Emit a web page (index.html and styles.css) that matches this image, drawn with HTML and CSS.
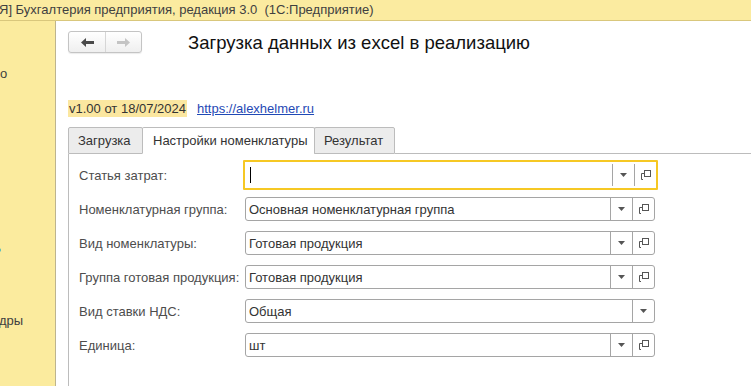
FILE: index.html
```html
<!DOCTYPE html>
<html lang="ru">
<head>
<meta charset="UTF-8" />
<title>Загрузка данных из excel в реализацию</title>
<link rel="stylesheet" href="styles.css">
</head>
<body>
<div class="titlebar">Я] Бухгалтерия предприятия, редакция 3.0  (1С:Предприятие)</div>

<div class="layout">
  <div class="sidebar">
    <span class="side-item first">о</span>
    <span class="side-dot"></span>
    <span class="side-item last">дры</span>
  </div>

  <div class="main">
    <div class="header">
      <div class="nav">
        <button class="nav-btn">
          <svg width="13" height="9" viewBox="0 0 13 9"><path d="M0 4.5 L5 0 V3 H13 V6 H5 V9 Z" fill="#4a4a4a"/></svg>
        </button>
        <button class="nav-btn">
          <svg width="13" height="9" viewBox="0 0 13 9"><path d="M13 4.5 L8 0 V3 H0 V6 H8 V9 Z" fill="#c4c4c4"/></svg>
        </button>
      </div>
      <h1 class="title">Загрузка данных из excel в реализацию</h1>
    </div>

    <div class="version">
      <span class="version-tag">v1.00 от 18/07/2024</span>
      <a class="site-link" href="#">https://alexhelmer.ru</a>
    </div>

    <div class="tabs">
      <div class="tab">Загрузка</div>
      <div class="tab active">Настройки номенклатуры</div>
      <div class="tab">Результат</div>
      <div class="tab-rest"></div>
    </div>

    <div class="panel">
      <div class="row">
        <label class="label">Статья затрат:</label>
        <div class="field focused">
          <span class="value"><span class="caret"></span></span>
          <span class="btn drop"><svg width="7" height="4" viewBox="0 0 7 4"><path d="M0 0 H7 L3.5 4 Z" fill="#555"/></svg></span>
          <span class="btn open"><svg width="11" height="10" viewBox="0 0 11 10"><rect x="4.5" y="0.5" width="6" height="6" fill="none" stroke="#555"/><path d="M4 3.5 H1.5 V9.5 M1.5 9.5 H3" fill="none" stroke="#555"/></svg></span>
        </div>
      </div>
      <div class="row">
        <label class="label">Номенклатурная группа:</label>
        <div class="field">
          <span class="value">Основная номенклатурная группа</span>
          <span class="btn drop"><svg width="7" height="4" viewBox="0 0 7 4"><path d="M0 0 H7 L3.5 4 Z" fill="#555"/></svg></span>
          <span class="btn open"><svg width="11" height="10" viewBox="0 0 11 10"><rect x="4.5" y="0.5" width="6" height="6" fill="none" stroke="#555"/><path d="M4 3.5 H1.5 V9.5 M1.5 9.5 H3" fill="none" stroke="#555"/></svg></span>
        </div>
      </div>
      <div class="row">
        <label class="label">Вид номенклатуры:</label>
        <div class="field">
          <span class="value">Готовая продукция</span>
          <span class="btn drop"><svg width="7" height="4" viewBox="0 0 7 4"><path d="M0 0 H7 L3.5 4 Z" fill="#555"/></svg></span>
          <span class="btn open"><svg width="11" height="10" viewBox="0 0 11 10"><rect x="4.5" y="0.5" width="6" height="6" fill="none" stroke="#555"/><path d="M4 3.5 H1.5 V9.5 M1.5 9.5 H3" fill="none" stroke="#555"/></svg></span>
        </div>
      </div>
      <div class="row">
        <label class="label">Группа готовая продукция:</label>
        <div class="field">
          <span class="value">Готовая продукция</span>
          <span class="btn drop"><svg width="7" height="4" viewBox="0 0 7 4"><path d="M0 0 H7 L3.5 4 Z" fill="#555"/></svg></span>
          <span class="btn open"><svg width="11" height="10" viewBox="0 0 11 10"><rect x="4.5" y="0.5" width="6" height="6" fill="none" stroke="#555"/><path d="M4 3.5 H1.5 V9.5 M1.5 9.5 H3" fill="none" stroke="#555"/></svg></span>
        </div>
      </div>
      <div class="row">
        <label class="label">Вид ставки НДС:</label>
        <div class="field">
          <span class="value">Общая</span>
          <span class="btn open"><svg width="7" height="4" viewBox="0 0 7 4"><path d="M0 0 H7 L3.5 4 Z" fill="#555"/></svg></span>
        </div>
      </div>
      <div class="row">
        <label class="label">Единица:</label>
        <div class="field">
          <span class="value">шт</span>
          <span class="btn drop"><svg width="7" height="4" viewBox="0 0 7 4"><path d="M0 0 H7 L3.5 4 Z" fill="#555"/></svg></span>
          <span class="btn open"><svg width="11" height="10" viewBox="0 0 11 10"><rect x="4.5" y="0.5" width="6" height="6" fill="none" stroke="#555"/><path d="M4 3.5 H1.5 V9.5 M1.5 9.5 H3" fill="none" stroke="#555"/></svg></span>
        </div>
      </div>
    </div>
  </div>
</div>
</body>
</html>
```

FILE: styles.css
```css
body {
  margin: 0;
  height: 386px;
  overflow: hidden;
  font-family: 'Liberation Sans', Arial, sans-serif;
  font-size: 13px;
  color: #333;
  background-color: #fff;
}

.titlebar {
  height: 20px;
  line-height: 19px;
  margin-left: -1px;
  white-space: pre;
  color: #404040;
  background-color: #fbeba0;
  border-bottom: 1px solid #d9c77c;
}

.layout {
  display: flex;
  height: 365px;
}

.sidebar {
  width: 55px;
  flex-shrink: 0;
  background-color: #fbeb9e;
  border-right: 1px solid #bdb48e;
  position: relative;
  overflow: hidden;
}

.side-item {
  position: absolute;
  left: 0;
  color: #404040;
}

.side-item.first {
  top: 45px;
  left: 0;
}

.side-item.last {
  top: 292px;
  left: -1px;
}

.side-dot {
  position: absolute;
  left: -3px;
  top: 227px;
  width: 4px;
  height: 4px;
  border-radius: 50%;
  background-color: #5bb;
}

.main {
  flex: 1;
  padding: 10px 0 0 12px;
  display: flex;
  flex-direction: column;
}

.header {
  display: flex;
  align-items: center;
  gap: 46px;
  height: 22px;
}

.nav {
  display: flex;
  height: 22px;
  border: 1px solid #c4c4c4;
  border-radius: 3px;
  box-sizing: border-box;
  background: linear-gradient(#fff, #efefef);
  box-shadow: 0 1px 1px rgba(0, 0, 0, 0.08);
}

.nav-btn {
  width: 36px;
  height: 20px;
  padding: 0;
  border: none;
  background: transparent;
  display: flex;
  align-items: center;
  justify-content: center;
}

.nav-btn + .nav-btn {
  border-left: 1px solid #d6d6d6;
}

.title {
  margin: 2px 0 0;
  font-size: 18.5px;
  font-weight: normal;
  color: #111;
  white-space: nowrap;
}

.version {
  margin-top: 47px;
  display: flex;
  align-items: center;
  gap: 10px;
  height: 17px;
}

.version-tag {
  background-color: #fbe7a0;
  color: #333;
  line-height: 17px;
  padding: 0 1px;
}

.site-link {
  color: #1f49b5;
  text-decoration: underline;
}

.tabs {
  margin-top: 10px;
  display: flex;
  height: 27px;
}

.tab {
  box-sizing: border-box;
  height: 27px;
  line-height: 26px;
  padding: 0 9px;
  white-space: nowrap;
  color: #333;
  background-color: #ececec;
  border: 1px solid #bcbcbc;
  border-radius: 2px 2px 0 0;
}

.tab:first-child {
  width: 75px;
}

.tab.active {
  background-color: #fff;
  border-bottom-color: #fff;
  margin-left: -1px;
  width: 173px;
  padding: 0 10px;
}

.tab:nth-child(3) {
  margin-left: -1px;
  width: 81px;
}

.tab-rest {
  flex: 1;
  border-bottom: 1px solid #bcbcbc;
}

.panel {
  flex: 1;
  border-left: 1px solid #bcbcbc;
  padding: 4px 0 0 10px;
}

.row {
  display: flex;
  align-items: center;
  height: 34px;
}

.label {
  width: 166px;
  flex-shrink: 0;
  color: #4d4d4d;
  white-space: nowrap;
}

.field {
  width: 410px;
  height: 24px;
  box-sizing: border-box;
  display: flex;
  align-items: stretch;
  border: 1px solid #a5a5a5;
  border-radius: 3px;
  background-color: #fff;
}

.field.focused {
  width: 415px;
  height: 30px;
  margin-left: -2px;
  border: 2px solid #f6c824;
  border-radius: 1px;
  padding: 2px 0;
}

.value {
  flex: 1;
  padding-left: 3px;
  display: flex;
  align-items: center;
  color: #333;
  white-space: nowrap;
}

.caret {
  display: inline-block;
  width: 1px;
  height: 16px;
  margin-left: 2px;
  background-color: #000;
}

.btn {
  width: 21px;
  display: flex;
  align-items: center;
  justify-content: center;
  border-left: 1px solid #a5a5a5;
}
```
